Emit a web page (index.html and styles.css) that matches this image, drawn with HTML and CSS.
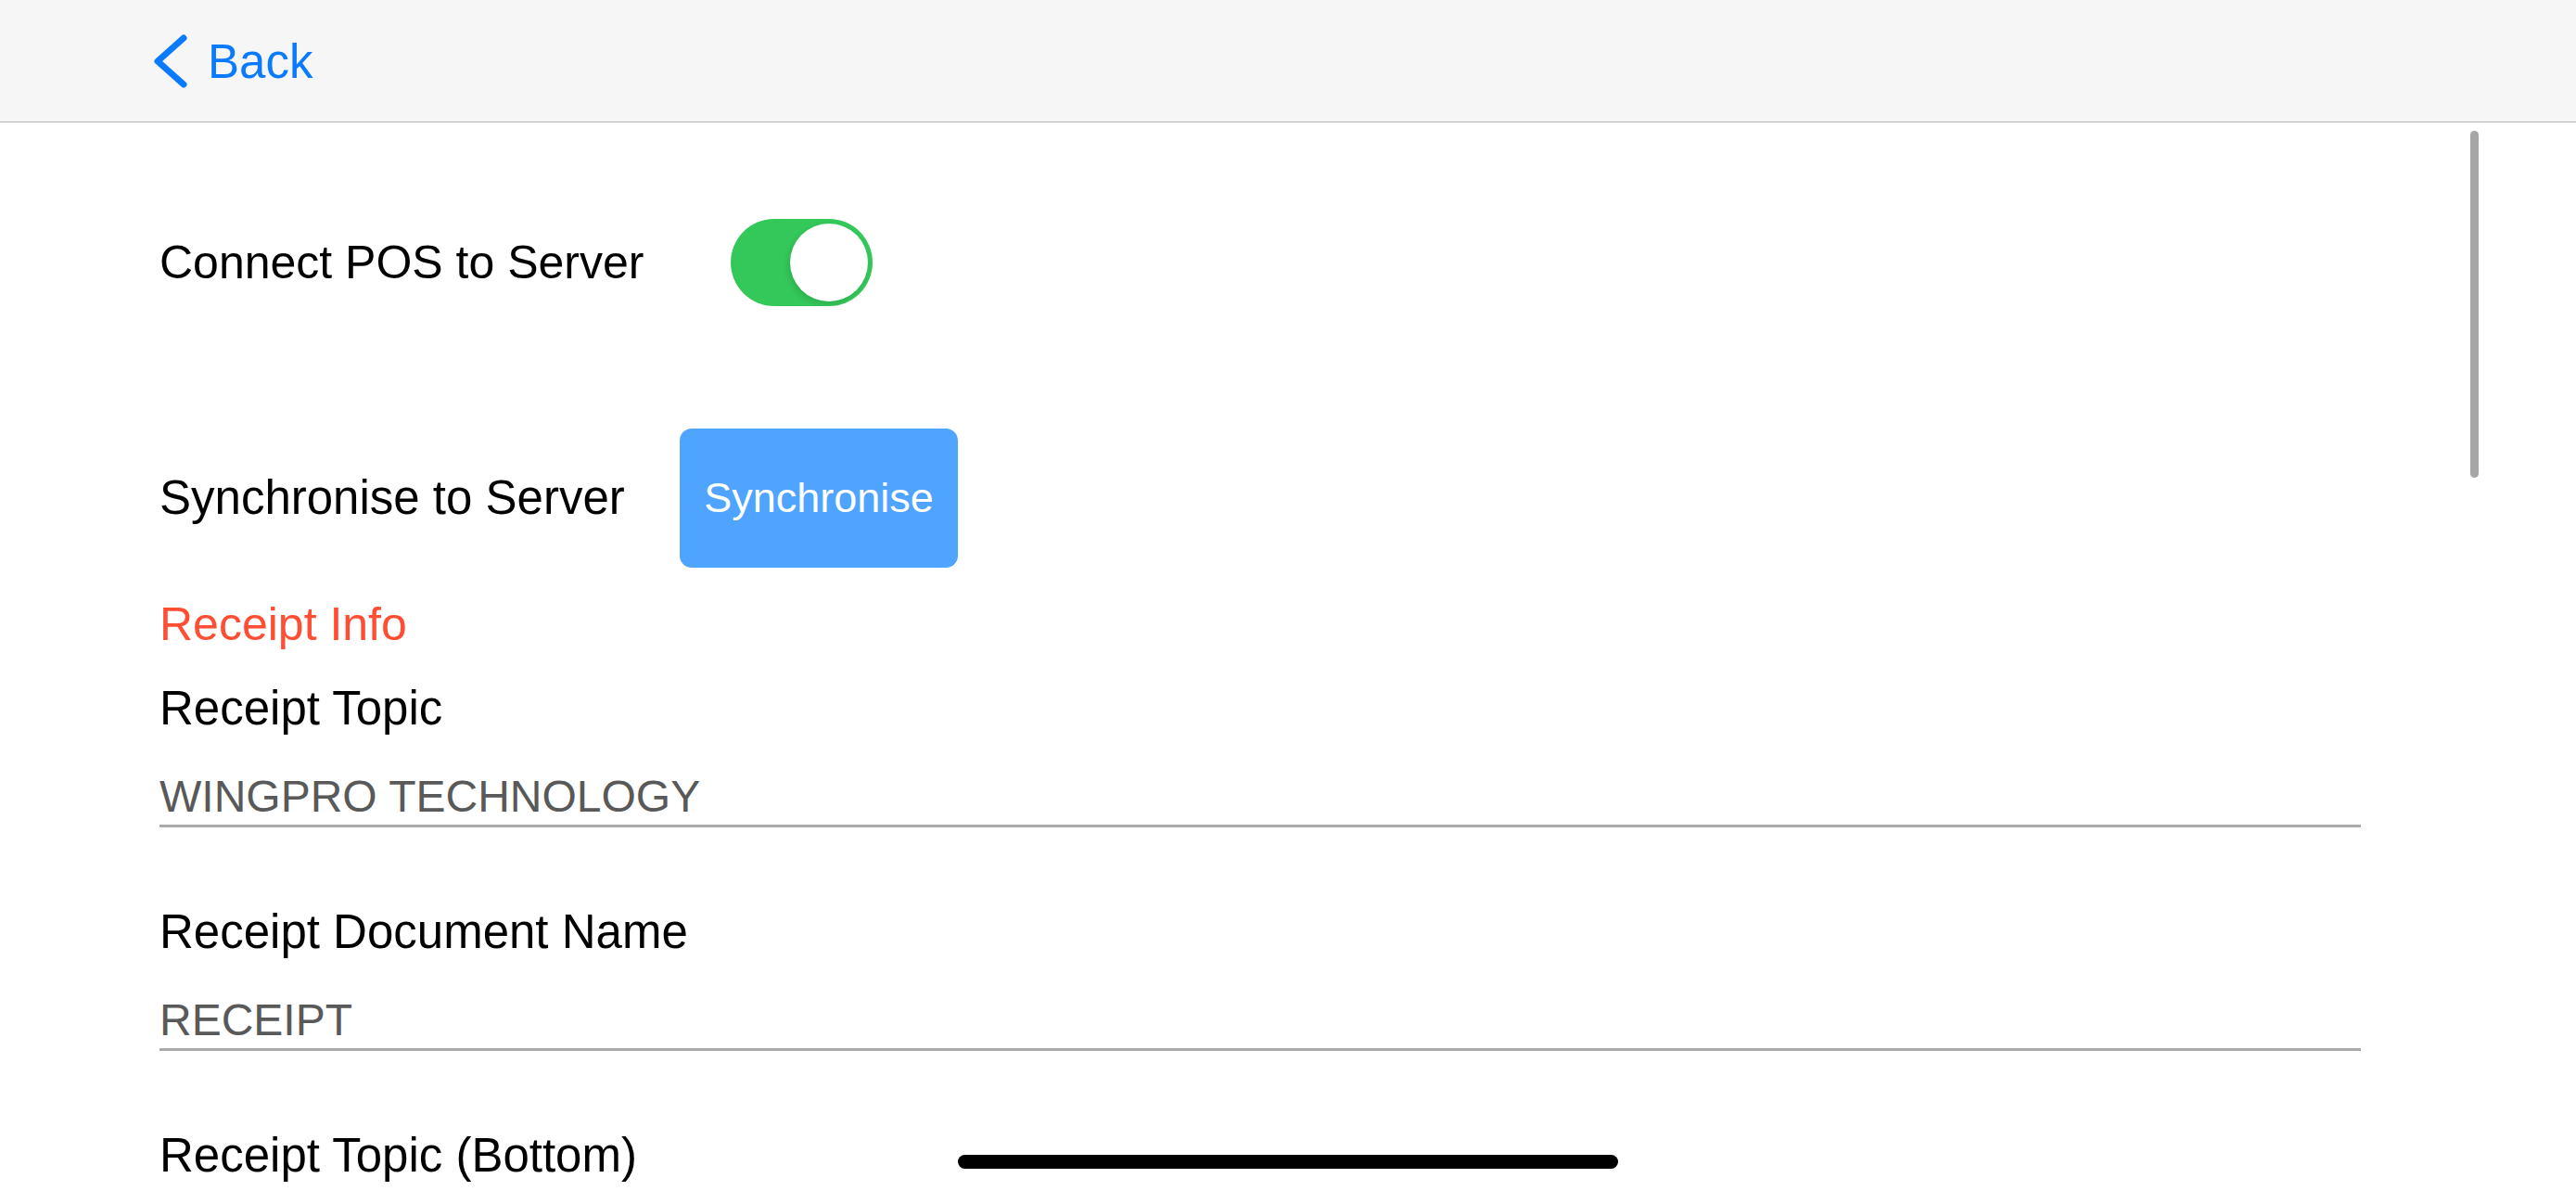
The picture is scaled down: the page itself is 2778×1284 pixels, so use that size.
FILE: index.html
```html
<!DOCTYPE html>
<html lang="en">
<head>
<meta charset="utf-8">
<title>Settings</title>
<link rel="stylesheet" href="styles.css">
</head>
<body>
<div class="screen">
  <header class="navbar">
    <a class="back" href="#">
      <svg class="chevron" width="40" height="60" viewBox="0 0 40 60" aria-hidden="true">
        <path d="M34 5 L6 30 L34 55" fill="none" stroke="#0a7aff" stroke-width="7" stroke-linecap="round" stroke-linejoin="round"/>
      </svg>
      <span class="back-text">Back</span>
    </a>
  </header>

  <main class="content">
    <div class="row row-connect">
      <span class="row-label label-connect">Connect POS to Server</span>
      <div class="switch" role="switch" aria-checked="true"><span class="knob"></span></div>
    </div>

    <div class="row row-sync">
      <span class="row-label label-sync">Synchronise to Server</span>
      <button class="sync-btn" type="button">Synchronise</button>
    </div>

    <div class="section-title">Receipt Info</div>

    <div class="field first">
      <div class="field-label">Receipt Topic</div>
      <div class="field-input">WINGPRO TECHNOLOGY</div>
    </div>

    <div class="field">
      <div class="field-label">Receipt Document Name</div>
      <div class="field-input">RECEIPT</div>
    </div>

    <div class="field">
      <div class="field-label">Receipt Topic (Bottom)</div>
    </div>
  </main>

  <div class="scroll-indicator"></div>
  <div class="home-indicator"></div>
</div>
</body>
</html>
```

FILE: styles.css
```css
html, body {
  margin: 0;
  padding: 0;
  background: #ffffff;
}

body {
  font-family: "Liberation Sans", Arial, sans-serif;
  color: #000;
}

.screen {
  position: relative;
  width: 2778px;
  height: 1284px;
  overflow: hidden;
  background: #ffffff;
}

.navbar {
  height: 131px;
  background: #f6f6f6;
  border-bottom: 1px solid #b3b3b3;
  display: flex;
  align-items: center;
  padding-left: 164px;
}

.back {
  display: flex;
  align-items: center;
  text-decoration: none;
  color: #0a7aff;
}

.chevron {
  display: block;
}

.back-text {
  font-size: 51px;
  line-height: 60px;
  margin-left: 20px;
  margin-top: 2px;
}

.content {
  padding-left: 172px;
  padding-right: 232px;
}

.row {
  display: flex;
  align-items: center;
}

.row-label {
  font-size: 51px;
  line-height: 60px;
}

.row-connect {
  margin-top: 104px;
}

.label-connect {
  flex: 0 0 616px;
  font-size: 50px;
}

.label-sync {
  flex: 0 0 561px;
}

.switch {
  position: relative;
  width: 153px;
  height: 94px;
  border-radius: 47px;
  background: #34c759;
}

.knob {
  position: absolute;
  right: 5px;
  top: 5px;
  width: 84px;
  height: 84px;
  border-radius: 50%;
  background: #ffffff;
  box-shadow: -2px 3px 6px rgba(0, 0, 0, 0.12);
}

.row-sync {
  margin-top: 132px;
}

.sync-btn {
  width: 300px;
  height: 150px;
  border: none;
  border-radius: 13px;
  background: #4ea4fe;
  color: #ffffff;
  font-family: "Liberation Sans", Arial, sans-serif;
  font-size: 45px;
  padding: 0;
}

.section-title {
  margin-top: 31px;
  font-size: 50px;
  line-height: 60px;
  color: #ff4e33;
}

.field {
  margin-top: 83px;
}

.field.first {
  margin-top: 31px;
}

.field-label {
  font-size: 51px;
  line-height: 60px;
}

.field-input {
  margin-top: 35px;
  font-size: 48px;
  line-height: 60px;
  color: #595959;
  border-bottom: 3px solid #aaaaaa;
}

.scroll-indicator {
  position: absolute;
  left: 2664px;
  top: 141px;
  width: 9px;
  height: 374px;
  border-radius: 5px;
  background: #a6a6a6;
}

.home-indicator {
  position: absolute;
  left: 1033px;
  top: 1245px;
  width: 712px;
  height: 15px;
  border-radius: 8px;
  background: #000000;
}
```
